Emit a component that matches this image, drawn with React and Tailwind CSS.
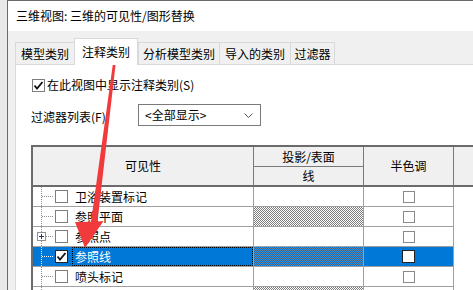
import React from "react";

const font = { fontFamily: '"Noto Sans CJK SC", "Noto Sans", sans-serif' };

function Check({ checked, selected }) {
  return (
    <div
      className={
        "w-[13px] h-[13px] shrink-0 bg-white border flex items-center justify-center " +
        (selected ? "border-[#222]" : "border-[#7d7d7d]")
      }
    >
      {checked && (
        <svg width="11" height="11" viewBox="0 0 11 11">
          <path d="M1.5 5.5 L4 8.5 L9.5 2" fill="none" stroke="#111" strokeWidth="1.8" />
        </svg>
      )}
    </div>
  );
}

const rows = [
  { id: 1, name: "卫浴装置标记", hatch: false },
  { id: 2, name: "参照平面", hatch: true },
  { id: 3, name: "参照点", hatch: false, expand: true },
  { id: 4, name: "参照线", hatch: true, selected: true, checked: true },
  { id: 5, name: "喷头标记", hatch: false },
  { id: 6, name: "", hatch: true },
];

function Row({ row }) {
  const sel = row.selected;
  return (
    <div
      className={
        "flex h-[20px] w-[421px] border-b border-[#a0a0a0] " +
        (sel ? "bg-[#0078d7] text-white" : "bg-white text-black")
      }
    >
      <div className="w-[221px] h-full border-r border-[#a0a0a0] flex items-center">
        <div className="relative w-[20px] h-full shrink-0">
          <div
            className={
              "absolute left-[8px] top-0 h-full border-l border-dotted " +
              (sel ? "border-white" : "border-[#8c8c8c]")
            }
          />
          <div
            className={
              "absolute left-[9px] right-0 top-[9px] border-t border-dotted " +
              (sel ? "border-white" : "border-[#8c8c8c]")
            }
          />
          {row.expand && (
            <div className="absolute left-[4px] top-[5px] w-[9px] h-[9px] bg-white border border-[#919191] flex items-center justify-center">
              <svg width="7" height="7" viewBox="0 0 7 7">
                <path d="M1 3.5 H6 M3.5 1 V6" stroke="#1f3b66" strokeWidth="1" />
              </svg>
            </div>
          )}
        </div>
        <div className="ml-[2px]">
          <Check checked={row.checked} selected={sel} />
        </div>
        <div
          className={
            "ml-[4px] h-full flex-1 flex items-center pl-[2px] text-[12px] leading-[14px] " +
            (sel ? "border border-dotted border-black" : "border border-transparent")
          }
        >
          {row.name}
        </div>
      </div>
      <div className="w-[110px] h-full border-r border-[#a0a0a0]">
        {row.hatch && (
          <div
            className={
              "w-full h-full bg-[length:2px_2px] " +
              (sel
                ? "bg-[image:repeating-conic-gradient(#6f7f8f_0%_25%,#0078d7_0%_50%)]"
                : "bg-[image:repeating-conic-gradient(#7a7a7a_0%_25%,#ffffff_0%_50%)]")
            }
          />
        )}
      </div>
      <div className="w-[90px] h-full border-r border-[#a0a0a0] flex items-center justify-center">
        {sel ? (
          <div className="w-[13px] h-[13px] bg-white border border-[#222]" />
        ) : (
          <div className="w-[12px] h-[12px] bg-white border border-[#8a8a8a]" />
        )}
      </div>
    </div>
  );
}

export default function App() {
  const tabs = [
    { label: "模型类别", w: "w-[60px]" },
    { label: "注释类别", w: "w-[64px]", active: true },
    { label: "分析模型类别", w: "w-[82px]" },
    { label: "导入的类别", w: "w-[72px]" },
    { label: "过滤器", w: "w-[45px]" },
  ];

  return (
    <div className="relative w-[473px] h-[290px] overflow-hidden flex bg-[#ececec] text-black" style={font}>
      <div className="w-[7px] h-full bg-[#e9e9e9] shrink-0" />
      <div className="flex-1 h-full flex flex-col border-l border-t border-[#6a6a6a] bg-[#f0f0f0]">
        <div className="h-[30px] bg-white flex items-center pl-[8px] text-[12px] leading-[14px] shrink-0">
          三维视图: 三维的可见性/图形替换
        </div>
        <div className="flex-1 flex flex-col pl-[7px] pt-[7px]">
          <div className="flex items-end h-[26px]">
            {tabs.map((t) =>
              t.active ? (
                <div
                  key={t.label}
                  className={
                    t.w +
                    " relative z-10 h-[27px] -mb-px bg-white border-x border-t border-[#d9d9d9] flex items-center justify-center text-[12px] leading-[14px] pb-[1px]"
                  }
                >
                  {t.label}
                </div>
              ) : (
                <div
                  key={t.label}
                  className={
                    t.w +
                    " h-[22px] bg-[#f0f0f0] border-x border-t border-[#d9d9d9] -mr-px flex items-center justify-center text-[12px] leading-[14px]"
                  }
                >
                  {t.label}
                </div>
              )
            )}
          </div>
          <div className="flex-1 bg-white border-l border-t border-[#d9d9d9] flex flex-col">
            <div className="flex items-center pl-[16px] pt-[13px] h-[27px]">
              <Check checked />
              <span className="ml-[2px] text-[12px] leading-[14px]">在此视图中显示注释类别(S)</span>
            </div>
            <div className="flex items-center mt-[12px]">
              <div className="w-[122px] pl-[15px] pt-[3px] text-[12px] leading-[14px]">过滤器列表(F)</div>
              <div className="w-[123px] h-[22px] border border-[#7a7a7a] bg-white flex items-center pl-[6px] pr-[7px] text-[12px] leading-[14px]">
                <span className="flex-1">&lt;全部显示&gt;</span>
                <svg width="9" height="5" viewBox="0 0 9 5">
                  <path d="M0.5 0.5 L4.5 4.5 L8.5 0.5" fill="none" stroke="#555" strokeWidth="1" />
                </svg>
              </div>
            </div>
            <div className="ml-[15px] mt-[19px] w-[500px] border-l-2 border-t-2 border-[#6b6b6b] bg-white flex flex-col">
              <div className="flex h-[40px] bg-[#f0f0f0] border-b-2 border-[#6b6b6b] text-[12px] leading-[14px]">
                <div className="w-[221px] border-r border-[#7a7a7a] flex items-center justify-center">可见性</div>
                <div className="w-[110px] border-r border-[#7a7a7a] flex flex-col">
                  <div className="h-[20px] border-b border-[#7a7a7a] flex items-center justify-center">投影/表面</div>
                  <div className="flex-1 flex items-center justify-center">线</div>
                </div>
                <div className="w-[90px] border-r border-[#7a7a7a] flex items-center justify-center">半色调</div>
                <div className="flex-1" />
              </div>
              {rows.map((r) => (
                <Row key={r.id} row={r} />
              ))}
            </div>
          </div>
        </div>
      </div>
      <svg className="absolute left-0 top-0 pointer-events-none" width="473" height="290" viewBox="0 0 473 290">
        <path d="M114 56 L116.5 56.5 L97.5 221.5 L103.5 221 L85 248 L75 222 L91 221.8 Z" fill="#f03a3c" />
      </svg>
    </div>
  );
}
